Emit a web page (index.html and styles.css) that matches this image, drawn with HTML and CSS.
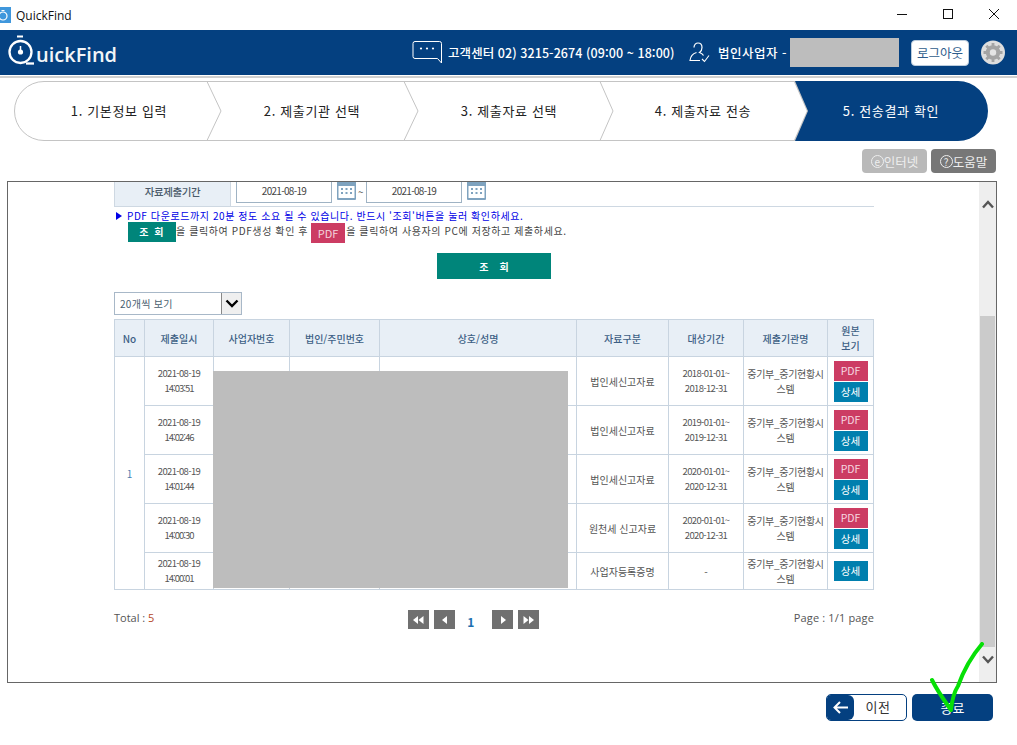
FILE: index.html
```html
<!DOCTYPE html>
<html lang="ko">
<head>
<meta charset="utf-8">
<title>QuickFind</title>
<link rel="stylesheet" href="styles.css">
</head>
<body>
<div class="app">
  <div class="titlebar">
    <svg class="app-icon" width="11" height="16" viewBox="0 0 11 16"><rect width="11" height="16" fill="#3f97dc"/><circle cx="3" cy="9" r="4" fill="none" stroke="#fff" stroke-width="1.2"/><rect x="1.5" y="3" width="3" height="1" fill="#fff"/></svg>
    <span class="app-name">QuickFind</span>
    <div class="win-controls">
      <svg width="12" height="12" viewBox="0 0 12 12"><path d="M1 6.5H11" stroke="#111" fill="none"/></svg>
      <svg width="12" height="12" viewBox="0 0 12 12"><rect x="1.5" y="1.5" width="9" height="9" stroke="#111" fill="none"/></svg>
      <svg width="12" height="12" viewBox="0 0 12 12"><path d="M1 1L11 11M11 1L1 11" stroke="#111" fill="none"/></svg>
    </div>
  </div>

  <header class="topbar">
    <div class="logo">
      <svg width="28" height="32" viewBox="0 0 28 32"><path d="M9 1.5H15" stroke="#fff" stroke-width="2" fill="none"/><circle cx="12.500" cy="17" r="11" fill="none" stroke="#fff" stroke-width="2.300"/><path d="M12.500 11V15" stroke="#fff" stroke-width="1.500"/><circle cx="12.500" cy="17" r="2.600" fill="#fff"/><path d="M18 28.500H26" stroke="#fff" stroke-width="2.300" fill="none"/></svg>
      <span class="logo-text">uickFind</span>
    </div>
    <div class="topbar-info">
      <svg class="chat-icon" width="31" height="23" viewBox="0 0 31 23"><path d="M3 .5H27.500Q29.500 .5 29.500 2.500V22L25.500 17.500H3Q1 17.500 1 15.500V2.500Q1 .5 3 .5Z" fill="none" stroke="#fff"/><circle cx="9" cy="7.500" r="1.100" fill="#fff"/><circle cx="15" cy="7.500" r="1.100" fill="#fff"/><circle cx="21" cy="7.500" r="1.100" fill="#fff"/></svg>
      <span class="info-text call">고객센터 02) 3215-2674 (09:00 ~ 18:00)</span>
      <svg class="user-icon" width="21" height="21" viewBox="0 0 21 21"><path d="M5 5.500C5 2.500 7 1 9 1C11 1 13 2.500 13 5.500C13 8 12 9.500 10.500 10.500C13 11.500 14 12.500 14.500 13.500M7.500 10.500C4 11.500 1.500 14 1 18.500H11" fill="none" stroke="#fff" stroke-width="1.200"/><path d="M13 17L15.500 19.500L20 13.500" fill="none" stroke="#fff" stroke-width="1.100"/></svg>
      <span class="info-text biz">법인사업자 -</span>
      <div class="redact-name"></div>
      <button class="logout">로그아웃</button>
      <svg class="gear" width="24" height="25" viewBox="0 0 24 25"><circle cx="12" cy="12.500" r="12" fill="#dedede"/><circle cx="12" cy="12.500" r="5.500" fill="none" stroke="#a4a4a4" stroke-width="3.500"/><path d="M12 3V22M2.500 12.500H21.500M5.300 5.800L18.700 19.200M18.700 5.800L5.300 19.200" stroke="#a4a4a4" stroke-width="2.800"/><circle cx="12" cy="12.500" r="3.200" fill="#e4e4e4"/></svg>
    </div>
  </header>
  <div class="rule"></div>

  <nav class="stepper">
    <svg class="stepper-art" width="975" height="60" viewBox="0 0 975 60"><path d="M781 .5H30A29.500 29.500 0 0 0 30 59.500H781" fill="#fff" stroke="#c4c4c4"/><path d="M193 .5L207 30L193 59.500M390 .5L404 30L390 59.500M586 .5L599 30L586 59.500" fill="none" stroke="#c4c4c4"/><path d="M781 .5L794 30L781 59.500" fill="none" stroke="#c4c4c4" stroke-width="2"/><path d="M781 0L794 30L781 60H944A30 30 0 0 0 944 0Z" fill="#044080"/></svg>
    <div class="step s1">1. 기본정보 입력</div>
    <div class="step s2">2. 제출기관 선택</div>
    <div class="step s3">3. 제출자료 선택</div>
    <div class="step s4">4. 제출자료 전송</div>
    <div class="step s5">5. 전송결과 확인</div>
  </nav>

  <div class="toolbar">
    <button class="tool tool-net"><span class="tool-mark">e</span>인터넷</button>
    <button class="tool tool-help"><span class="tool-mark">?</span>도움말</button>
  </div>

  <section class="frame">
    <div class="content">
      <div class="period">
        <div class="period-label">자료제출기간</div>
        <div class="date-box">2021-08-19</div>
        <svg class="cal" width="19" height="22" viewBox="0 0 19 22"><rect y="3" width="19" height="19" rx="1" fill="#7fa3bf"/><rect x="1.500" y="8" width="16" height="12" fill="#fff"/><rect x="3" width="3" height="6" fill="#7fa3bf"/><rect x="13" width="3" height="6" fill="#7fa3bf"/><path d="M4 11H15M4 15H15" stroke="#7fa3bf" stroke-width="2" stroke-dasharray="2 2.500"/></svg>
        <span class="tilde">~</span>
        <div class="date-box">2021-08-19</div>
        <svg class="cal" width="19" height="22" viewBox="0 0 19 22"><rect y="3" width="19" height="19" rx="1" fill="#7fa3bf"/><rect x="1.500" y="8" width="16" height="12" fill="#fff"/><rect x="3" width="3" height="6" fill="#7fa3bf"/><rect x="13" width="3" height="6" fill="#7fa3bf"/><path d="M4 11H15M4 15H15" stroke="#7fa3bf" stroke-width="2" stroke-dasharray="2 2.500"/></svg>
      </div>

      <p class="note-blue"><span class="tri"></span>PDF 다운로드까지 20분 정도 소요 될 수 있습니다. 반드시 '조회'버튼을 눌러 확인하세요.</p>
      <div class="note-dark">
        <span class="mini-search">조 회</span><span>을 클릭하여 PDF생성 확인 후</span><span class="mini-pdf">PDF</span><span>을 클릭하여 사용자의 PC에 저장하고 제출하세요.</span>
      </div>

      <div class="search-row"><button class="search">조 &nbsp; &nbsp;회</button></div>

      <div class="select">
        <span class="select-text">20개씩 보기</span>
        <span class="select-arrow"><svg width="14" height="9" viewBox="0 0 14 9"><path d="M1.500 1.500L7 7L12.500 1.500" fill="none" stroke="#000" stroke-width="2.400"/></svg></span>
      </div>

      <div class="table-wrap">
        <table class="grid">
          <colgroup>
            <col class="c-no"><col class="c-date"><col class="c-biz"><col class="c-id"><col class="c-name"><col class="c-type"><col class="c-period"><col class="c-org"><col class="c-view">
          </colgroup>
          <thead>
            <tr class="head">
              <th>No</th><th>제출일시</th><th>사업자번호</th><th>법인/주민번호</th><th>상호/성명</th><th>자료구분</th><th>대상기간</th><th>제출기관명</th><th>원본<br>보기</th>
            </tr>
          </thead>
          <tbody>
            <tr class="row">
              <td class="no" rowspan="5">1</td>
              <td class="tight">2021-08-19<br><span class="time">14:03:51</span></td><td></td><td></td><td></td>
              <td>법인세신고자료</td><td class="tight">2018-01-01~<br>2018-12-31</td><td class="org">중기부_중기현황시스템</td>
              <td><div class="acts"><a class="act pdf">PDF</a><a class="act det">상세</a></div></td>
            </tr>
            <tr class="row">
              <td class="tight">2021-08-19<br><span class="time">14:02:46</span></td><td></td><td></td><td></td>
              <td>법인세신고자료</td><td class="tight">2019-01-01~<br>2019-12-31</td><td class="org">중기부_중기현황시스템</td>
              <td><div class="acts"><a class="act pdf">PDF</a><a class="act det">상세</a></div></td>
            </tr>
            <tr class="row">
              <td class="tight">2021-08-19<br><span class="time">14:01:44</span></td><td></td><td></td><td></td>
              <td>법인세신고자료</td><td class="tight">2020-01-01~<br>2020-12-31</td><td class="org">중기부_중기현황시스템</td>
              <td><div class="acts"><a class="act pdf">PDF</a><a class="act det">상세</a></div></td>
            </tr>
            <tr class="row">
              <td class="tight">2021-08-19<br><span class="time">14:00:30</span></td><td></td><td></td><td></td>
              <td>원천세 신고자료</td><td class="tight">2020-01-01~<br>2020-12-31</td><td class="org">중기부_중기현황시스템</td>
              <td><div class="acts"><a class="act pdf">PDF</a><a class="act det">상세</a></div></td>
            </tr>
            <tr class="row-last">
              <td class="tight">2021-08-19<br><span class="time">14:00:01</span></td><td></td><td></td><td></td>
              <td>사업자등록증명</td><td>-</td><td class="org">중기부_중기현황시스템</td>
              <td><div class="acts"><a class="act det">상세</a></div></td>
            </tr>
          </tbody>
        </table>
        <div class="redact-table"></div>
      </div>

      <div class="pager-row">
        <span class="total">Total : <em>5</em></span>
        <div class="pager">
          <span class="pg"><svg width="11" height="8" viewBox="0 0 11 8"><path d="M5 0V8L0 4ZM10.500 0V8L5.500 4Z" fill="#fff"/></svg></span>
          <span class="pg"><svg width="6" height="8" viewBox="0 0 6 8"><path d="M5 0V8L0 4Z" fill="#fff"/></svg></span>
          <span class="pg-num">1</span>
          <span class="pg"><svg width="6" height="8" viewBox="0 0 6 8"><path d="M1 0V8L6 4Z" fill="#fff"/></svg></span>
          <span class="pg"><svg width="11" height="8" viewBox="0 0 11 8"><path d="M.5 0V8L5.500 4ZM6 0V8L11 4Z" fill="#fff"/></svg></span>
        </div>
        <span class="pageinfo">Page : 1/1 page</span>
      </div>
    </div>

    <div class="scrollbar">
      <div class="sb-up"><svg width="12" height="9" viewBox="0 0 12 9"><path d="M1 7.500L6 2L11 7.500" fill="none" stroke="#555" stroke-width="2.400"/></svg></div>
      <div class="sb-thumb"></div>
      <div class="sb-down"><svg width="12" height="9" viewBox="0 0 12 9"><path d="M1 1.500L6 7L11 1.500" fill="none" stroke="#555" stroke-width="2.400"/></svg></div>
    </div>
  </section>

  <footer class="footer">
    <button class="btn-prev"><span class="prev-arrow"><svg width="15" height="13" viewBox="0 0 15 13"><path d="M7 1L1.500 6.500L7 12M2 6.500H15" fill="none" stroke="#fff" stroke-width="2"/></svg></span><span class="prev-label">이전</span></button>
    <button class="btn-end">종료</button>
  </footer>

  <svg class="check" width="60" height="90" viewBox="0 0 60 90"><path d="M2 38C8 50 14 58 21 68C22 58 24 50 28 44C33 30 40 16 52 2" fill="none" stroke="#06e006" stroke-width="4" stroke-linecap="round" stroke-linejoin="round"/></svg>
</div>
</body>
</html>
```

FILE: styles.css
```css
* { box-sizing: border-box; }
html, body { margin: 0; padding: 0; }
body {
  background: #fff;
  font-family: "Noto Sans CJK KR", "Noto Sans", sans-serif;
  color: #555;
  overflow: hidden;
}
button { font-family: inherit; border: 0; padding: 0; cursor: pointer; }
.app { position: relative; width: 1017px; height: 745px; overflow: hidden; }

/* title bar */
.titlebar { height: 30px; display: flex; align-items: center; padding-bottom: 0; }
.app-icon { margin-top: -1px; }
.app-name { margin-left: 5px; font: 12px "Open Sans", sans-serif; color: #111; }
.win-controls { margin-left: auto; display: flex; gap: 34px; padding-right: 17px; margin-top: -2px; }

/* header */
.topbar { height: 45px; background: #044080; display: flex; align-items: center; color: #fff; }
.logo { display: flex; align-items: flex-end; margin-left: 8px; width: 130px; }
.logo svg { margin-top: -4px; }
.logo-text { font: 600 20px/24px "Open Sans", sans-serif; margin-left: 0; letter-spacing: 0; color: #f2f5f8; }
.topbar-info { margin-left: auto; display: flex; align-items: center; }
.chat-icon { margin-right: 5px; }
.info-text { font-size: 12.500px; font-weight: 500; white-space: nowrap; }
.call { width: 226px; letter-spacing: .07px; }
.user-icon { margin-left: 15px; margin-right: 8px; }
.biz { width: 72px; letter-spacing: .5px; }
.redact-name { width: 109px; height: 29px; background: #bdbdbd; }
.logout { width: 58px; height: 26px; margin-left: 12px; background: #fff; border-radius: 4px; color: #2f5d8c; font-size: 12.500px; border: 1px solid #bcd; }
.gear { margin-left: 12px; margin-right: 12px; }
.rule { height: 2px; margin-top: 1px; background: #d0d0d0; }

/* stepper */
.stepper { position: relative; height: 60px; margin: 3px 0 0 14px; display: flex; }
.stepper-art { position: absolute; left: 0; top: 0; }
.step { position: relative; display: flex; align-items: center; justify-content: center; font-size: 13px; letter-spacing: .65px; color: #222; padding-bottom: 2px; white-space: nowrap; }
.s1 { width: 210px; }
.s2 { width: 176px; }
.s3 { width: 218px; }
.s4 { width: 170px; }
.s5 { width: 206px; color: #fff; }

/* toolbar */
.toolbar { height: 24px; margin-top: 8px; padding-right: 21px; display: flex; justify-content: flex-end; gap: 4px; }
.tool { width: 65px; height: 24px; border-radius: 4px; color: #eee; font-size: 12.500px; display: flex; align-items: center; justify-content: center; }
.tool-mark { width: 13px; height: 13px; border: 1px solid #eee; border-radius: 50%; font-size: 10px; line-height: 11px; text-align: center; }
.tool-net { background: #b9b9b9; }
.tool-help { background: #777; }

/* frame */
.frame { height: 502px; width: 990px; margin: 8px 0 0 7px; border: 1px solid #666; display: flex; }
.content { flex: 1; padding-left: 106px; overflow: hidden; }

.period { width: 760px; height: 25px; border-bottom: 1px solid #ced8e2; display: flex; align-items: flex-end; overflow: hidden; }
.period-label { width: 117px; height: 24px; background: #e8eff6; border-left: 1px solid #ced8e2; border-right: 1px solid #ced8e2; text-align: center; font-size: 10.500px; line-height: 20px; font-weight: 500; color: #4a5a6a; margin-right: 5px; letter-spacing: -.4px; }
.date-box { width: 96px; height: 24px; margin-bottom: 3px; border: 1px solid #9fb3c4; text-align: center; font-size: 10px; line-height: 22px; color: #444; letter-spacing: -.7px; }
.cal { margin: 0 2px 6px 5px; }
.period .cal:last-child { margin-right: 0; }
.tilde { width: 8px; margin-bottom: 7px; font-size: 10px; line-height: 14px; color: #555; }

.note-blue { margin: 1px 0 0 0; height: 15px; font-size: 10px; line-height: 15px; color: #0000e6; letter-spacing: .58px; white-space: nowrap; display: flex; align-items: center; }
.tri { width: 0; height: 0; border-left: 6px solid #0000e6; border-top: 4px solid transparent; border-bottom: 4px solid transparent; margin: 0 5px 0 2px; }
.note-dark { margin-left: 14px; height: 21px; display: flex; align-items: flex-start; font-size: 10px; line-height: 17px; color: #444; letter-spacing: .6px; white-space: nowrap; margin-top: -1px; }
.mini-search { width: 48px; height: 20px; background: #00857a; color: #fff; text-align: center; font-size: 10px; font-weight: 700; line-height: 19px; letter-spacing: 1.5px; }
.mini-pdf { width: 34px; height: 20px; margin: 1px 1px 0 3px; background: #cc3c63; color: #f3d6dd; text-align: center; font-size: 11px; line-height: 20px; letter-spacing: 0; }

.search-row { width: 760px; margin-top: 10px; display: flex; justify-content: center; }
.search { width: 114px; height: 26px; background: #00857a; color: #fff; font-size: 10px; font-weight: 700; }

.select { width: 128px; height: 23px; margin-top: 13px; border: 1px solid #a8b8c8; display: flex; align-items: center; justify-content: space-between; }
.select-text { margin-left: 5px; font-size: 10px; color: #4a6070; letter-spacing: .3px; }
.select-arrow { width: 20px; height: 21px; background: #efefef; border-left: 1px solid #888; display: flex; align-items: center; justify-content: center; }

.table-wrap { position: relative; width: 760px; margin-top: 4px; }
.grid { width: 759px; table-layout: fixed; border-collapse: collapse; }
.c-no { width: 30px; } .c-date { width: 69px; } .c-biz { width: 76px; } .c-id { width: 90px; } .c-name { width: 197px; }
.c-type { width: 92px; } .c-period { width: 75px; } .c-org { width: 84px; } .c-view { width: 46px; }
.grid th, .grid td { border: 1px solid #c8d4e0; padding: 0; text-align: center; font-size: 10px; }
.grid th { background: #e8eff6; color: #3d5f85; font-weight: 500; line-height: 15px; }
.head { height: 37px; }
.row { height: 49px; }
.row-last { height: 37px; }
.grid td { color: #555; line-height: 15px; }
.grid td.tight { font-size: 9.500px; letter-spacing: -.65px; }
.grid td.org { letter-spacing: -.3px; }
.time { letter-spacing: -1px; }
.grid td.no { color: #4a7fb0; }
.acts { display: flex; flex-direction: column; align-items: center; gap: 1px; }
.act { width: 34px; height: 20px; color: #fff; font-size: 10.500px; line-height: 19px; }
.pdf { background: #cc3c63; color: #f6d8e0; }
.det { background: #007fae; }
.redact-table { position: absolute; left: 99px; top: 52px; width: 355px; height: 217px; background: #bdbdbd; }

.pager-row { width: 760px; margin-top: 20px; height: 19px; display: flex; align-items: center; position: relative; }
.total, .pageinfo { font: 11px "Open Sans", sans-serif; color: #555; letter-spacing: 0; padding-bottom: 4px; }
.total em { font-style: normal; color: #b5461f; }
.pager { display: flex; gap: 5px; margin-left: 254px; align-items: center; }
.pg { width: 21px; height: 19px; background: #707070; display: flex; align-items: center; justify-content: center; }
.pg-num { width: 21px; text-align: center; color: #1c6fb0; font-weight: 700; font-size: 12px; padding-top: 4px; margin-right: 6px; }
.pageinfo { margin-left: auto; letter-spacing: .15px; }

/* scrollbar */
.scrollbar { width: 17px; background: #eee; display: flex; flex-direction: column; align-items: center; }
.sb-up { height: 134px; padding-top: 18px; }
.sb-thumb { width: 15px; height: 331px; background: #cbcbcb; }
.sb-down { padding-top: 8px; }
.sb-up svg, .sb-down svg { display: block; }

/* footer */
.footer { margin-top: 11px; padding-right: 24px; display: flex; justify-content: flex-end; gap: 5px; }
.btn-prev { width: 81px; height: 27px; border: 1px solid #044080; border-radius: 5px; background: #fff; display: flex; overflow: hidden; }
.prev-arrow { width: 27px; height: 100%; background: #044080; border-radius: 0 6px 6px 0; display: flex; align-items: center; justify-content: center; }
.prev-label { flex: 1; line-height: 23px; color: #333; font-size: 13px; text-align: center; letter-spacing: .5px; padding-right: 4px; }
.btn-end { width: 81px; height: 27px; border-radius: 5px; background: #044080; color: #fff; font-size: 13px; }
.check { position: absolute; left: 930px; top: 642px; }
```
